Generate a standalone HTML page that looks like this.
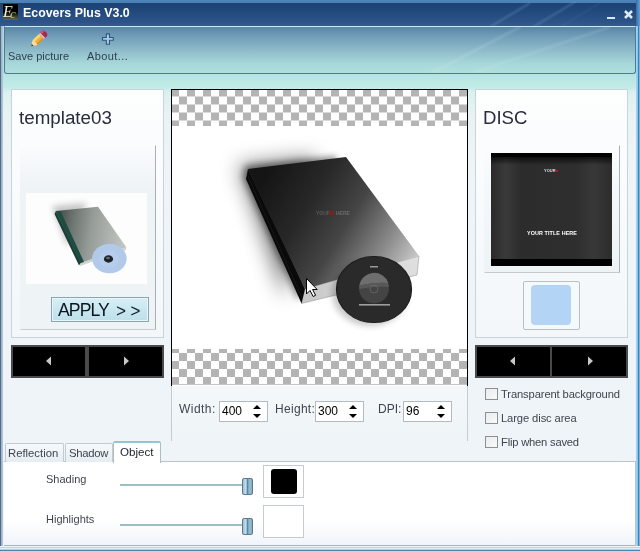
<!DOCTYPE html>
<html><head><meta charset="utf-8">
<style>
*{box-sizing:border-box;margin:0;padding:0}
html,body{width:640px;height:551px;overflow:hidden;background:#3d78b4}
body{position:relative;font-family:"Liberation Sans",sans-serif}
.a{position:absolute}
.t{position:absolute;white-space:nowrap;line-height:1;will-change:transform}
#frame{left:0;top:0;width:640px;height:551px;background:linear-gradient(90deg,#4f6a8c 0,#4f6a8c 1px,#98b0c4 1px,#a8bccc 2px,#b8ccd6 3px,#b8ccd6 3px,#e0eef0 3px,#e0eef0 635px,#a8c0d0 635px,#a8c0d0 636px,#b0d8f4 636px,#90c4e8 637.5px,#3a82bc 638px,#3a82bc 639px,#68bce8 639px)}
#title{left:0;top:0;width:640px;height:26px;background:linear-gradient(180deg,#4f84b8 0,#4a80b4 2.5px,#1e4476 3px,#1e4476 6px,#244c80 14px,#2c5488 22px,#38598a 26px)}
#client{left:3px;top:26px;width:633px;height:520px;background:linear-gradient(180deg,#a9d9da 0,#b4e4e0 48px,#c4ebe8 62px,#dcf0f0 66px,#e8f3f5 90px,#eef4f8 140px,#eef4f8 100%)}
#toolbar{left:4px;top:26px;width:632px;height:48px;border:1px solid #4e7a94;border-top-color:#c8ecff;border-radius:0 0 3px 3px;background:linear-gradient(180deg,#5a86a6 0,#6e9ab6 8px,#8cb8c8 22px,#a6d6d8 36px,#b2e2de 47px)}
.panel{background:linear-gradient(180deg,#fdfefe,#f3f7fa);border:1px solid #c9d3d8}
.nav{background:#000;border:2px solid #4a4a4a}
.chk{width:13px;height:12px;border:1px solid #8e8f8f;background:linear-gradient(135deg,#e8ecef,#f8fafb)}
.lbl{font-size:11.2px;color:#40444f}
.spin{background:#fff;border:1px solid #b4babe}
</style></head><body>
<div id="frame" class="a"></div>
<div id="title" class="a"></div>
<!-- app icon -->
<div class="a" style="left:3px;top:4px;width:15px;height:16px;background:linear-gradient(180deg,#000 0,#000 8px,#3a3a28 12px,#6a6050 16px)"></div>
<div class="t" style="left:3px;top:4px;font-family:'Liberation Serif';font-style:italic;font-size:16px;color:#f0eedc">E</div>
<div class="t" style="left:10px;top:7px;font-family:'Liberation Serif';font-style:italic;font-size:13px;color:#a8b860">c</div>
<div class="t" style="left:23px;top:7px;font-size:12.4px;font-weight:bold;color:#fff">Ecovers Plus V3.0</div>
<svg class="a" style="left:0;top:0" width="640" height="26"><defs><filter id="sb" x="-20%" y="-20%" width="140%" height="140%"><feGaussianBlur stdDeviation="0.8"/></filter></defs><g filter="url(#sb)">
 <path d="M490 27 L530 3" stroke="#8ab4dc" stroke-width="1.2" opacity="0.45"/>
 <path d="M533 27 L575 2" stroke="#8ab4dc" stroke-width="1.2" opacity="0.45"/>
 <path d="M560 27 L600 3" stroke="#8ab4dc" stroke-width="0.8" opacity="0.25"/>
</g></svg>
<!-- min/close -->
<div class="a" style="left:607px;top:17px;width:8px;height:2px;background:#d8e8f8"></div>
<svg class="a" style="left:623px;top:9px" width="11" height="11"><path d="M2 2L9 9M9 2L2 9" stroke="#dceaf6" stroke-width="2.5"/></svg>
<div class="a" style="left:636px;top:0;width:4px;height:26px;background:linear-gradient(90deg,#3a6a9c,#4a88c0 2px,#5aa4dc)"></div>

<div id="client" class="a"></div>
<div class="a" style="left:0;top:546px;width:640px;height:5px;background:linear-gradient(180deg,#f2f6f8 0,#f2f6f8 1.5px,#c8d2d8 1.5px,#c8d2d8 2.5px,#e4eef2 2.5px,#b4d2e2 3.5px,#5a92bc 4px,#3a78a8 5px)"></div>
<div id="toolbar" class="a"></div>
<svg class="a" style="left:5px;top:27px" width="630" height="46" viewBox="5 27 630 46"><g filter="url(#sb)">
 <path d="M430 74 L520 27" stroke="#d8f4f8" stroke-width="2" opacity="0.2"/>
 <path d="M470 74 L610 27" stroke="#d8f4f8" stroke-width="2" opacity="0.18"/></g>
</svg>
<!-- pencil icon -->
<svg class="a" style="left:24px;top:26px" width="30" height="24" viewBox="24 26 30 24">
 <g transform="translate(31.2,46.3) rotate(-44)">
  <path d="M0 0 L5.5 -3.4 L14 -3.4 L14 3.4 L5.5 3.4 Z" fill="#f0b23c"/>
  <path d="M5.5 -3.4 L14 -3.4 L14 -1 L5.5 -1 Z" fill="#f8dc78"/>
  <path d="M5.5 1.6 L14 1.6 L14 3.4 L5.5 3.4 Z" fill="#d8902c"/>
  <path d="M0 0 L5.5 -3.4 Q6.5 0 5.5 3.4 Z" fill="#f6dcb0"/>
  <path d="M0 0 L2 -1.3 L2 1.3 Z" fill="#3a2a18"/>
  <rect x="14" y="-3.5" width="2" height="7" fill="#e8b0c0"/>
  <path d="M16 -3.6 L18 -3.6 Q20.5 -3.6 20.5 0 Q20.5 3.6 18 3.6 L16 3.6 Z" fill="#a8284a"/>
  <path d="M16 -3.6 L18 -3.6 Q19.5 -3.4 19.8 -1.5 L16 -1.5 Z" fill="#d86080" opacity="0.8"/>
 </g>
</svg>
<!-- plus icon -->
<svg class="a" style="left:100px;top:31px" width="16" height="16" viewBox="0 0 16 16">
 <path d="M6.3 2.9h3.2v3.6h3.8v2.8h-3.8v3.9h-3.2v-3.9h-3.8v-2.8h3.8z" fill="#a8c8ea" stroke="#2e5478" stroke-width="1.1" stroke-linejoin="round"/>
</svg>
<div class="t" style="left:8px;top:51px;font-size:11px;color:#2d4050">Save picture</div>
<div class="t" style="left:87px;top:51px;font-size:11px;color:#2d4050;letter-spacing:0.4px">About...</div>

<!-- left panel -->
<div class="a panel" style="left:11px;top:89px;width:153px;height:249px"></div>
<div class="t" style="left:19px;top:109px;font-size:18.8px;color:#272d3c">template03</div>
<div class="a" style="left:20px;top:145px;width:136px;height:185px;border:1px solid transparent;border-right-color:#a8b0b6;border-bottom-color:#c4ccd2;background:linear-gradient(180deg,rgba(238,243,246,0) 0,#eef3f6 45px,#eef3f6);background-origin:border-box"></div>
<div class="a" style="left:26px;top:193px;width:121px;height:91px;background:#fdfdfd"></div>
<!-- APPLY -->
<div class="a" style="left:51px;top:297px;width:98px;height:25px;border:1px solid #8aa4b0;box-shadow:inset 0 0 0 1px #e8f6fa;background:linear-gradient(180deg,#d8eff6,#c8e6ef 55%,#bee0ea)"></div>
<div class="t" style="left:58px;top:302px;font-size:17.6px;color:#0c1420;letter-spacing:-0.9px">APPLY</div><div class="t" style="left:116px;top:301px;font-size:19px;color:#0c1420;letter-spacing:5px;transform:scaleX(0.9);transform-origin:0 0">&gt;&gt;</div>
<!-- left nav -->
<div class="a nav" style="left:11px;top:345px;width:76px;height:33px"></div>
<div class="a nav" style="left:86.5px;top:345px;width:77.5px;height:33px"></div>
<svg class="a" style="left:45px;top:356px" width="8" height="10"><path d="M6 0.5V9.5L1 5Z" fill="#c8c8c8"/></svg>
<svg class="a" style="left:122px;top:356px" width="8" height="10"><path d="M2 0.5V9.5L7 5Z" fill="#c8c8c8"/></svg>

<!-- center -->
<div class="a" style="left:171px;top:385px;width:297px;height:56px;border-left:1px solid #c3ccd2;border-right:1px solid #c3ccd2;background:linear-gradient(180deg,#f4f8fa,#eef4f7)"></div>
<div class="a" style="left:171px;top:89px;width:297px;height:297px;border:1px solid #000;border-bottom:0;background:#fff;overflow:hidden">
 <div class="a" style="left:0;top:0;width:296px;height:36px;background-color:#fff;background-image:conic-gradient(#fff 0 90deg,#b4b4b4 90deg 180deg,#fff 180deg 270deg,#b4b4b4 270deg);background-size:16px 16px;background-position:-1px -1.5px"></div>
 <div class="a" style="left:0;top:259px;width:296px;height:36px;background-color:#fff;background-image:conic-gradient(#fff 0 90deg,#b4b4b4 90deg 180deg,#fff 180deg 270deg,#b4b4b4 270deg);background-size:16px 16px;background-position:-1px -4px;border-bottom:1px solid #c4c4c4"></div>
</div>

<svg class="a" style="left:172px;top:126px" width="295" height="223" viewBox="172 126 295 223">
 <defs>
  <filter id="bl8" x="-50%" y="-50%" width="200%" height="200%"><feGaussianBlur stdDeviation="10"/></filter>
  <filter id="bl1" x="-50%" y="-50%" width="200%" height="200%"><feGaussianBlur stdDeviation="0.6"/></filter>
  <filter id="bl2" x="-50%" y="-50%" width="200%" height="200%"><feGaussianBlur stdDeviation="2"/></filter>
  <filter id="bl3" x="-50%" y="-50%" width="200%" height="200%"><feGaussianBlur stdDeviation="3"/></filter>
  <linearGradient id="cov" x1="268" y1="172" x2="414" y2="262" gradientUnits="userSpaceOnUse">
   <stop offset="0" stop-color="#151515"/><stop offset="0.3" stop-color="#282828"/><stop offset="0.55" stop-color="#454545"/><stop offset="0.8" stop-color="#888"/><stop offset="1" stop-color="#c8c8c8"/>
  </linearGradient>
  <linearGradient id="pg" x1="300" y1="300" x2="420" y2="260" gradientUnits="userSpaceOnUse">
   <stop offset="0" stop-color="#c8c8c8"/><stop offset="1" stop-color="#e0e0e0"/>
  </linearGradient>
  
 </defs>
 <path d="M252 168 L330 160 L300 295 L298 300 Z" fill="#000" opacity="0.5" filter="url(#bl8)" transform="translate(-14,-3)"/>
 <path d="M248 168 L340 158 L305 289 L301 303 L246 180 Z" fill="#000" opacity="0.45" filter="url(#bl3)" transform="translate(-3,-2)"/>
 <path d="M305 289 L419 256 L417 275 L301.5 303.5 Z" fill="url(#pg)" stroke="#9a9a9a" stroke-width="0.6"/>
 <path d="M248 169 L346 157 L419 256 L305 289 Z" fill="url(#cov)"/>
 <path d="M248 169 L246 179 L301.5 303.5 L305 289 Z" fill="#0a0a0a"/>
 <path d="M247.5 175 L301.5 297" stroke="#1c1c1c" stroke-width="0.8"/>
 <g filter="url(#bl1)"><text x="316" y="215" font-family="Liberation Sans" font-size="5" font-weight="bold" fill="#5a5a5a">YOUR</text>
 <rect x="329" y="211" width="5" height="4" fill="#7a2020"/>
 <text x="336" y="215" font-family="Liberation Sans" font-size="5" font-weight="bold" fill="#6a6a6a">HERE</text></g>
 <ellipse cx="370" cy="293" rx="38" ry="33" fill="#000" opacity="0.22" filter="url(#bl3)"/>
 <ellipse cx="374" cy="289.5" rx="37.5" ry="33" fill="#2a2a2a"/>
 <ellipse cx="374" cy="289.5" rx="37.5" ry="33" fill="none" stroke="#1c1c1c" stroke-width="1.2"/>
 <circle cx="374" cy="288.5" r="15" fill="#444"/><path d="M359.3 285.5 A15 15 0 0 1 388.3 283 Q374 282 359.3 285.5 Z" fill="#6e6e6e"/><path d="M359.3 285.5 Q374 282 388.3 283 L388.9 287 Q374 286 359.1 289 Z" fill="#585858"/>
 <path d="M359 286 Q374 275 389 283" stroke="#8a8a8a" stroke-width="0" fill="none"/>
 <circle cx="374" cy="289" r="4" fill="none" stroke="#6a6a6a" stroke-width="0.8"/>
 <rect x="359" y="304" width="31" height="1.6" fill="#aaa" opacity="0.9"/>
 <rect x="370" y="266" width="8" height="1.5" fill="#999"/>
 <path d="M306.5 278.5 L306.5 294 L310 290.5 L313.2 296.5 L315.6 295.3 L312.6 289.5 L317.2 289.5 Z" fill="#fff" stroke="#000" stroke-width="1" stroke-linejoin="round"/>
</svg>
<svg class="a" style="left:26px;top:193px" width="121" height="91" viewBox="26 193 121 91">
 <defs>
  <linearGradient id="cov2" x1="58" y1="225" x2="124" y2="235" gradientUnits="userSpaceOnUse">
   <stop offset="0" stop-color="#44504c"/><stop offset="0.2" stop-color="#6c7470"/><stop offset="0.5" stop-color="#969c98"/><stop offset="1" stop-color="#c0c4c0"/>
  </linearGradient>
 </defs>
 <path d="M55 209 L90 206 L70 250 Z" fill="#000" opacity="0.22" filter="url(#bl3)" transform="translate(-3,-3)"/>
 <path d="M79.8 263.3 L126.3 247.3 L126 250 L80 266 Z" fill="#d0d4d0"/>
 <path d="M55.9 211 L98 206.7 L126.3 247.3 L79.8 263.3 Z" fill="url(#cov2)"/>
 <path d="M55.9 211 L54.5 214 L79 265.5 L80.5 263 Z" fill="#1a3e36"/>
 <path d="M56 211 L60.5 211 L84 262 L80 263.3 Z" fill="#1f4c42"/>
 <ellipse cx="109.4" cy="258.6" rx="17.3" ry="14.7" fill="#b2caea"/><ellipse cx="109" cy="259" rx="10" ry="8.5" fill="#b7cdec"/>
 <ellipse cx="108.5" cy="259" rx="4.6" ry="3.7" fill="#1e2228"/><ellipse cx="108" cy="258" rx="2" ry="1.2" fill="#606a70"/>
</svg>
<div class="t lbl" style="left:179px;top:403px;font-size:12px;letter-spacing:0.45px">Width:</div>
<div class="a spin" style="left:219px;top:401px;width:49px;height:21px"></div>
<div class="t" style="left:222px;top:405px;font-size:12px;color:#000">400</div>
<div class="t lbl" style="left:275px;top:403px;font-size:12px;letter-spacing:0.3px">Height:</div>
<div class="a spin" style="left:315px;top:401px;width:49px;height:21px"></div>
<div class="t" style="left:318px;top:405px;font-size:12px;color:#000">300</div>
<div class="t lbl" style="left:378px;top:403px;font-size:12px">DPI:</div>
<div class="a spin" style="left:403px;top:401px;width:49px;height:21px"></div>
<div class="t" style="left:406px;top:405px;font-size:12px;color:#000">96</div>
<svg class="a" style="left:251px;top:404px" width="12" height="16"><path d="M2 5L6 1L10 5Z M2 10L10 10L6 14Z" fill="#000"/></svg>
<svg class="a" style="left:347px;top:404px" width="12" height="16"><path d="M2 5L6 1L10 5Z M2 10L10 10L6 14Z" fill="#000"/></svg>
<svg class="a" style="left:435px;top:404px" width="12" height="16"><path d="M2 5L6 1L10 5Z M2 10L10 10L6 14Z" fill="#000"/></svg>

<!-- right panel -->
<div class="a panel" style="left:475px;top:89px;width:153px;height:249px"></div>
<div class="t" style="left:483px;top:108.6px;font-size:18.6px;color:#272d3c">DISC</div>
<div class="a" style="left:484px;top:145px;width:136px;height:128px;border:1px solid transparent;border-right-color:#a8b0b6;border-bottom-color:#c4ccd2;background:linear-gradient(180deg,rgba(238,243,246,0),#eef3f6);background-origin:border-box"></div>
<div class="a" style="left:491px;top:153px;width:121px;height:113px;background:linear-gradient(90deg,#2a2a2a 0,#3a3a3a 12%,#2c2c2c 25%,#2e2e2e 70%,#383838 85%,#2c2c2c 100%);border-top:4px solid #000;border-bottom:7px solid #000"></div>
<div class="a" style="left:491px;top:157px;width:121px;height:8px;background:linear-gradient(180deg,rgba(0,0,0,0.7),rgba(0,0,0,0))"></div>
<div class="t" style="left:544px;top:169px;font-size:4px;font-weight:bold;color:#ddd">YOUR</div><div class="a" style="left:555px;top:170px;width:3px;height:2px;background:#a02020"></div>
<div class="t" style="left:527px;top:231px;font-size:5.4px;font-weight:bold;color:#fff;letter-spacing:0.1px">YOUR TITLE HERE</div>
<div class="a" style="left:523px;top:281px;width:57px;height:49px;border:1px solid #b8c0c4;border-radius:2px;background:#f4f9fb"></div>
<div class="a" style="left:531px;top:285px;width:40px;height:40px;border-radius:4px;background:#b4d4f6"></div>
<!-- right nav -->
<div class="a nav" style="left:475px;top:345px;width:77px;height:33px"></div>
<div class="a nav" style="left:550px;top:345px;width:78px;height:33px"></div>
<svg class="a" style="left:509px;top:356px" width="8" height="10"><path d="M6 0.5V9.5L1 5Z" fill="#c8c8c8"/></svg>
<svg class="a" style="left:586px;top:356px" width="8" height="10"><path d="M2 0.5V9.5L7 5Z" fill="#c8c8c8"/></svg>
<!-- checkboxes -->
<div class="a chk" style="left:485px;top:388px"></div>
<div class="t lbl" style="left:501px;top:389px;letter-spacing:-0.12px">Transparent background</div>
<div class="a chk" style="left:485px;top:412px"></div>
<div class="t lbl" style="left:501px;top:413px;letter-spacing:-0.1px">Large disc area</div>
<div class="a chk" style="left:485px;top:436px"></div>
<div class="t lbl" style="left:501px;top:437px;letter-spacing:-0.2px">Flip when saved</div>

<!-- tabs -->
<div class="a" style="left:4px;top:461px;width:632px;height:85px;border-right:1px solid #b8c4cc;border-top:1px solid #b9c4cb;border-bottom:1px solid #a8b4bc;background:linear-gradient(180deg,#fff 0,#fff 58px,#f0f4fa 84px)"></div>
<div class="a" style="left:5px;top:443px;width:59px;height:19px;border:1px solid #c1cbd2;border-bottom:0;border-radius:2px 2px 0 0;background:linear-gradient(180deg,#f6f9fb,#e6eef3)"></div>
<div class="t lbl" style="left:8px;top:448px;font-size:11.3px">Reflection</div>
<div class="a" style="left:65px;top:443px;width:48px;height:19px;border:1px solid #c1cbd2;border-bottom:0;border-radius:2px 2px 0 0;background:linear-gradient(180deg,#f6f9fb,#e6eef3)"></div>
<div class="t lbl" style="left:69px;top:448px;font-size:11.3px;letter-spacing:-0.3px">Shadow</div>
<div class="a" style="left:113px;top:441px;width:48px;height:22px;border:1px solid #aebcc6;border-top:2px solid #90c8d0;border-bottom:0;border-radius:2px 2px 0 0;background:#fff"></div>
<div class="t lbl" style="left:120px;top:446px;font-size:11.6px;color:#1c2028">Object</div>

<div class="t lbl" style="left:46px;top:474px;font-size:11px">Shading</div>
<div class="a" style="left:120px;top:484px;width:126px;height:2px;background:#9ebfc2"></div>
<div class="a" style="left:242px;top:478px;width:11px;height:17px;border:1px solid #5f7890;border-radius:2px;background:linear-gradient(90deg,#9cbcd0 0,#c4e0ec 30%,#8ab4c8 42%,#5a88a8 50%,#7aa8c0 60%,#9cc4d4 78%,#80a4bc 100%)"></div>
<div class="a" style="left:263px;top:465px;width:41px;height:33px;border:1px solid #c4ccd0;background:#fff"></div>
<div class="a" style="left:271px;top:469px;width:26px;height:25px;border-radius:3px;background:#000"></div>

<div class="t lbl" style="left:46px;top:514px;font-size:11px">Highlights</div>
<div class="a" style="left:120px;top:524px;width:126px;height:2px;background:#9ebfc2"></div>
<div class="a" style="left:242px;top:518px;width:11px;height:17px;border:1px solid #5f7890;border-radius:2px;background:linear-gradient(90deg,#9cbcd0 0,#c4e0ec 30%,#8ab4c8 42%,#5a88a8 50%,#7aa8c0 60%,#9cc4d4 78%,#80a4bc 100%)"></div>
<div class="a" style="left:263px;top:505px;width:41px;height:33px;border:1px solid #c4ccd0;background:#fff"></div>

</body></html>
